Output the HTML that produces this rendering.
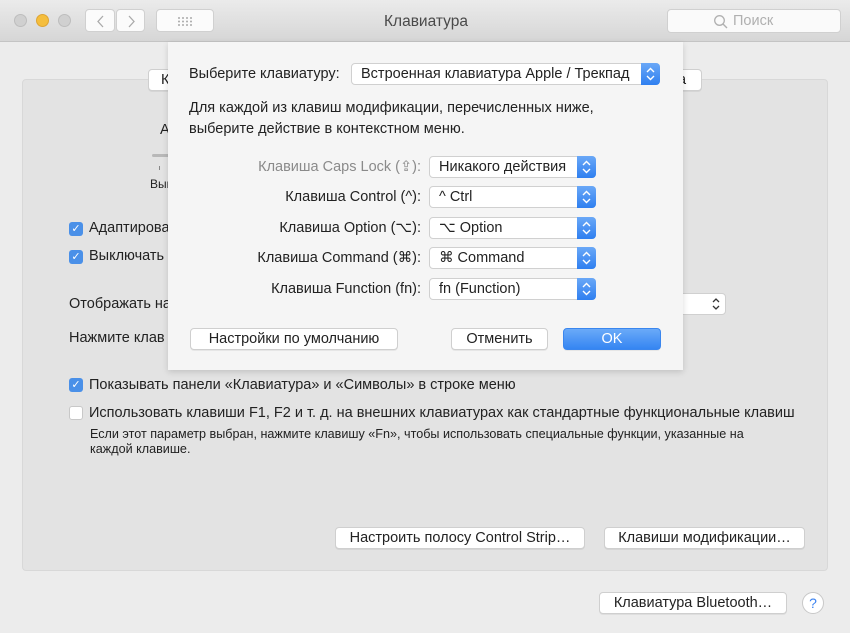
<!DOCTYPE html>
<html><head><meta charset="utf-8"><style>
*{box-sizing:border-box;margin:0;padding:0}
body{width:850px;height:633px;overflow:hidden;background:#ececec;font-family:"Liberation Sans","DejaVu Sans",sans-serif;font-size:14.5px;color:#222;position:relative}
.a{position:absolute;white-space:nowrap}
.title{left:0;top:0;width:850px;height:42px;background:linear-gradient(#ebebeb,#d6d6d6);border-bottom:1px solid #c4c4c4}
.dot{width:13px;height:13px;border-radius:50%;top:14px}
.tb{top:9px;height:23px;background:#fbfbfb;border:1px solid #d0d0d0;border-radius:4px}
.btn{background:#fff;border:1px solid #cfcfcf;border-radius:4px;box-shadow:0 1px 0 rgba(0,0,0,.06);text-align:center;height:22px;line-height:21px}
.cb{width:14px;height:14px;border-radius:3px;background:#4a90e8;color:#fff;font-size:11px;line-height:14px;text-align:center}
.pop{height:22px;background:#fff;border:1px solid #d0d0d0;border-radius:4px;line-height:21px;padding-left:9px}
.pop .ar{position:absolute;right:-1px;top:-1px;width:19px;height:22px;background:linear-gradient(#6aa8f7,#2f7ff0);border-radius:0 4px 4px 0}
.lbl{right:429px;text-align:right}
</style></head><body>
<div class="a title"></div>
<div class="a dot" style="left:14px;background:#d0d0d0;border:1px solid #bdbdbd"></div>
<div class="a dot" style="left:36px;background:#f5be3d;border:1px solid #dea534"></div>
<div class="a dot" style="left:58px;background:#d0d0d0;border:1px solid #bdbdbd"></div>
<div class="a tb" style="left:85px;width:30px"><svg width="30" height="23"><path d="M17 6l-5 5.5 5 5.5" stroke="#aaa" stroke-width="1.3" fill="none"/></svg></div>
<div class="a tb" style="left:116px;width:29px"><svg width="29" height="23"><path d="M12 6l5 5.5-5 5.5" stroke="#aaa" stroke-width="1.3" fill="none"/></svg></div>
<div class="a tb" style="left:156px;width:58px"><svg width="58" height="23"><g fill="#aaa"><circle cx="22" cy="8" r="1"/><circle cx="26" cy="8" r="1"/><circle cx="30" cy="8" r="1"/><circle cx="34" cy="8" r="1"/><circle cx="22" cy="11.5" r="1"/><circle cx="26" cy="11.5" r="1"/><circle cx="30" cy="11.5" r="1"/><circle cx="34" cy="11.5" r="1"/><circle cx="22" cy="15" r="1"/><circle cx="26" cy="15" r="1"/><circle cx="30" cy="15" r="1"/><circle cx="34" cy="15" r="1"/></g></svg></div>
<div class="a" style="left:384px;top:13px;font-size:15.5px;color:#4a4a4a">Клавиатура</div>
<div class="a tb" style="left:667px;width:174px;height:24px;background:#fafafa"><svg class="a" style="left:45px;top:4px" width="16" height="16"><circle cx="6.5" cy="6.5" r="4.8" stroke="#b0b0b0" stroke-width="1.3" fill="none"/><path d="M10 10l4 4" stroke="#b0b0b0" stroke-width="1.4"/></svg><span class="a" style="left:65px;top:3px;color:#b0b0b0">Поиск</span></div>

<div class="a" style="left:22px;top:79px;width:806px;height:492px;background:#e3e3e3;border:1px solid #d8d8d8;border-radius:4px"></div>
<div class="a btn" style="left:148px;top:69px;width:40px;text-align:left;padding-left:12px">К</div>
<div class="a btn" style="left:660px;top:69px;width:42px;text-align:left;padding-left:17px">а</div>
<div class="a" style="left:160px;top:122px">А</div>
<div class="a" style="left:152px;top:154px;width:30px;height:3px;background:#b8b8b8;border-radius:2px"></div>
<div class="a" style="left:159px;top:166px;width:1px;height:4px;background:#888"></div>
<div class="a" style="left:150px;top:177px;font-size:12px">Вык</div>
<div class="a cb" style="left:69px;top:222px">✓</div><div class="a" style="left:89px;top:220px">Адаптирова</div>
<div class="a cb" style="left:69px;top:250px">✓</div><div class="a" style="left:89px;top:248px">Выключать</div>
<div class="a" style="left:69px;top:296px">Отображать на</div>
<div class="a pop" style="left:640px;top:293px;width:86px"><svg class="a" style="right:4px;top:3px" width="10" height="14"><path d="M2 5l3-3 3 3M2 9l3 3 3-3" stroke="#333" stroke-width="1.3" fill="none"/></svg></div>
<div class="a" style="left:69px;top:330px">Нажмите клав</div>
<div class="a cb" style="left:69px;top:378px">✓</div><div class="a" style="left:89px;top:377px">Показывать панели «Клавиатура» и «Символы» в строке меню</div>
<div class="a" style="left:69px;top:406px;width:14px;height:14px;border-radius:3px;background:#fff;border:1px solid #c8c8c8"></div>
<div class="a" style="left:89px;top:405px">Использовать клавиши F1, F2 и т. д. на внешних клавиатурах как стандартные функциональные клавиш</div>
<div class="a" style="left:90px;top:427px;font-size:12.6px;line-height:15px">Если этот параметр выбран, нажмите клавишу «Fn», чтобы использовать специальные функции, указанные на<br>каждой клавише.</div>
<div class="a btn" style="left:335px;top:527px;width:250px">Настроить полосу Control Strip…</div>
<div class="a btn" style="left:604px;top:527px;width:201px">Клавиши модификации…</div>
<div class="a btn" style="left:599px;top:592px;width:188px">Клавиатура Bluetooth…</div>
<div class="a" style="left:802px;top:592px;width:22px;height:22px;border-radius:50%;background:#fff;border:1px solid #c8c8c8;color:#3b82f0;text-align:center;line-height:20px;font-size:14px">?</div>

<div class="a" style="left:168px;top:42px;width:515px;height:328px;background:#f5f5f5;box-shadow:0 2px 6px rgba(0,0,0,.15)"></div>
<div class="a" style="left:189px;top:66px">Выберите клавиатуру:</div>
<div class="a pop" style="left:351px;top:63px;width:309px;padding-left:9px">Встроенная клавиатура Apple / Трекпад<div class="ar"><svg width="19" height="22"><path d="M6 9l3.5-3.5L13 9M6 13l3.5 3.5L13 13" stroke="#fff" stroke-width="1.4" fill="none"/></svg></div></div>
<div class="a" style="left:189px;top:98px;line-height:21px">Для каждой из клавиш модификации, перечисленных ниже,<br>выберите действие в контекстном меню.</div>
<div class="a lbl" style="top:159px;color:#8a8a8a">Клавиша Caps Lock (⇪):</div>
<div class="a lbl" style="top:189px">Клавиша Control (^):</div>
<div class="a lbl" style="top:220px">Клавиша Option (⌥):</div>
<div class="a lbl" style="top:250px">Клавиша Command (⌘):</div>
<div class="a lbl" style="top:281px">Клавиша Function (fn):</div>
<div class="a pop" style="left:429px;top:156px;width:167px">Никакого действия<div class="ar"><svg width="19" height="22"><path d="M6 9l3.5-3.5L13 9M6 13l3.5 3.5L13 13" stroke="#fff" stroke-width="1.4" fill="none"/></svg></div></div>
<div class="a pop" style="left:429px;top:186px;width:167px">^ Ctrl<div class="ar"><svg width="19" height="22"><path d="M6 9l3.5-3.5L13 9M6 13l3.5 3.5L13 13" stroke="#fff" stroke-width="1.4" fill="none"/></svg></div></div>
<div class="a pop" style="left:429px;top:217px;width:167px">⌥ Option<div class="ar"><svg width="19" height="22"><path d="M6 9l3.5-3.5L13 9M6 13l3.5 3.5L13 13" stroke="#fff" stroke-width="1.4" fill="none"/></svg></div></div>
<div class="a pop" style="left:429px;top:247px;width:167px">⌘ Command<div class="ar"><svg width="19" height="22"><path d="M6 9l3.5-3.5L13 9M6 13l3.5 3.5L13 13" stroke="#fff" stroke-width="1.4" fill="none"/></svg></div></div>
<div class="a pop" style="left:429px;top:278px;width:167px">fn (Function)<div class="ar"><svg width="19" height="22"><path d="M6 9l3.5-3.5L13 9M6 13l3.5 3.5L13 13" stroke="#fff" stroke-width="1.4" fill="none"/></svg></div></div>
<div class="a btn" style="left:190px;top:328px;width:208px">Настройки по умолчанию</div>
<div class="a btn" style="left:451px;top:328px;width:97px">Отменить</div>
<div class="a btn" style="left:563px;top:328px;width:98px;background:linear-gradient(#6aaaf8,#3585f2);border-color:#3a86ee;color:#fff">OK</div>
</body></html>
